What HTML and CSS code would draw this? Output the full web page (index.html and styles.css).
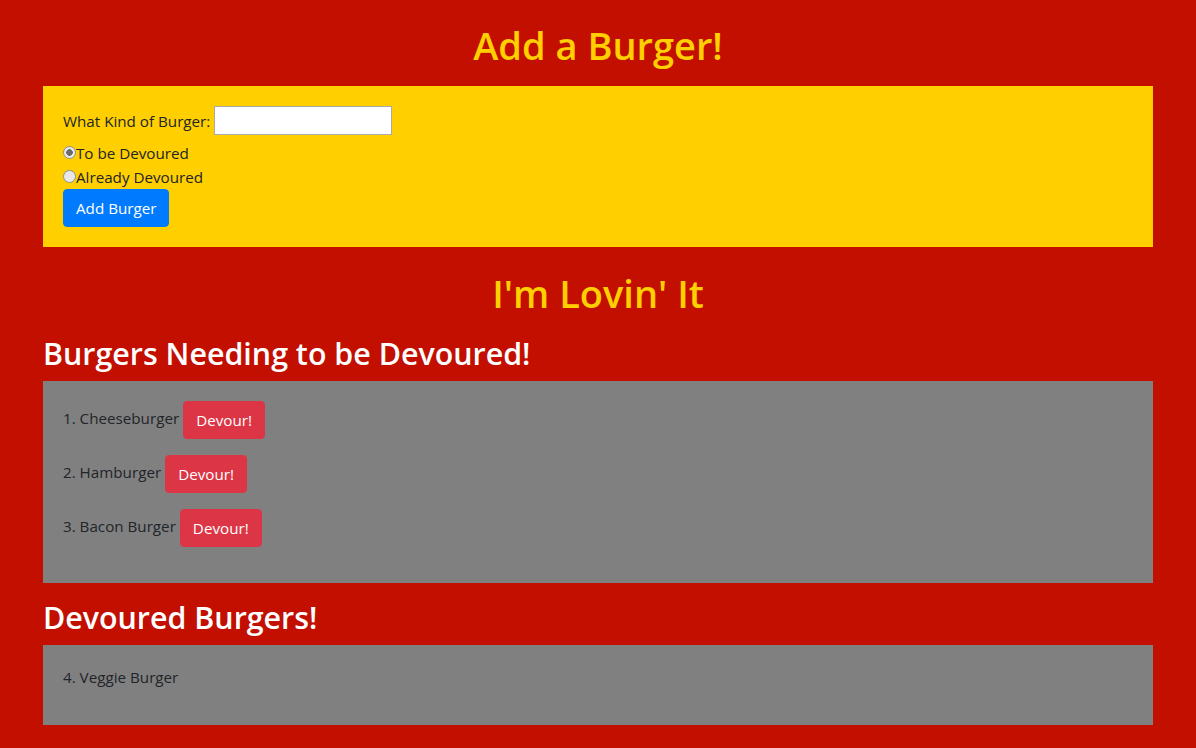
FILE: index.html
```html
<!DOCTYPE html>
<html lang="en">
<head>
<meta charset="utf-8">
<title>Burger Logger</title>
<link rel="stylesheet" href="styles.css">
</head>
<body>
<div class="container">
  <h1 class="title">Add a Burger!</h1>
  <form class="add-form">
    <div class="field">
      <label for="burger">What Kind of Burger:</label>
      <input type="text" id="burger" class="text-input">
    </div>
    <label class="radio-row"><input type="radio" name="devoured" class="radio" checked>To be Devoured</label>
    <label class="radio-row"><input type="radio" name="devoured" class="radio">Already Devoured</label>
    <button type="button" class="btn btn-primary">Add Burger</button>
  </form>

  <h1 class="title title-second">I'm Lovin' It</h1>

  <h2 class="section-title">Burgers Needing to be Devoured!</h2>
  <div class="panel">
    <div class="item"><span class="item-name">1. Cheeseburger</span><button type="button" class="btn btn-danger">Devour!</button></div>
    <div class="item"><span class="item-name">2. Hamburger</span><button type="button" class="btn btn-danger">Devour!</button></div>
    <div class="item"><span class="item-name">3. Bacon Burger</span><button type="button" class="btn btn-danger">Devour!</button></div>
  </div>

  <h2 class="section-title">Devoured Burgers!</h2>
  <div class="panel">
    <div class="item item-plain"><span class="item-name">4. Veggie Burger</span></div>
  </div>
</div>
</body>
</html>
```

FILE: styles.css
```css
* { box-sizing: border-box; }

html, body {
  margin: 0;
  padding: 0;
}

body {
  background: #c20f00;
  font-family: "Open Sans", "Noto Sans", sans-serif;
  font-size: 15.2px;
  line-height: 24px;
  color: #212529;
}

.container {
  width: 1110px;
  margin: 0 auto;
}

.title {
  margin: 0;
  padding-top: 21px;
  padding-bottom: 17px;
  text-align: center;
  color: #ffcf00;
  font-size: 38px;
  font-weight: 600;
  line-height: 48px;
}

.title-second {
  padding-top: 22px;
  padding-bottom: 0;
  margin-bottom: 18px;
}

.add-form {
  display: flex;
  flex-direction: column;
  align-items: flex-start;
  background: #ffcf00;
  padding: 20px;
}

.field {
  display: flex;
  align-items: center;
  gap: 4px;
  height: 29px;
  margin-bottom: 6px;
}

.text-input {
  width: 178px;
  height: 29px;
  border: 1px solid #a9a9a9;
  background: #fff;
  padding: 1px 2px;
  font: inherit;
}

.radio-row {
  display: flex;
  align-items: center;
  height: 24px;
}

.radio {
  appearance: none;
  -webkit-appearance: none;
  width: 13px;
  height: 13px;
  margin: 0;
  border-radius: 50%;
  border: 1px solid #8f8f8f;
  background: #e8e8e8;
  position: relative;
  top: -1px;
}

.radio:checked {
  background: radial-gradient(circle, #6b6b6b 0 3px, #e8e8e8 3.5px);
}

.btn {
  display: inline-block;
  font: inherit;
  font-size: 15.2px;
  line-height: 24px;
  padding: 6px 12px;
  border: 1px solid transparent;
  border-radius: 4px;
  color: #fff;
  cursor: pointer;
}

.btn-primary {
  background: #007bff;
  border-color: #007bff;
}

.btn-danger {
  background: #dc3545;
  border-color: #dc3545;
}

.section-title {
  margin: 0 0 8px;
  color: #fff;
  font-size: 30.4px;
  font-weight: 600;
  line-height: 38px;
}

.panel {
  background: #808080;
  padding: 20px;
  margin-bottom: 16px;
}

.item {
  height: 38px;
  margin-bottom: 16px;
  display: flex;
  align-items: center;
  gap: 4px;
}

.item-name {
  margin-bottom: 4px;
}

.item-plain {
  height: 24px;
}

.item-plain .item-name {
  margin-bottom: 0;
}
```
